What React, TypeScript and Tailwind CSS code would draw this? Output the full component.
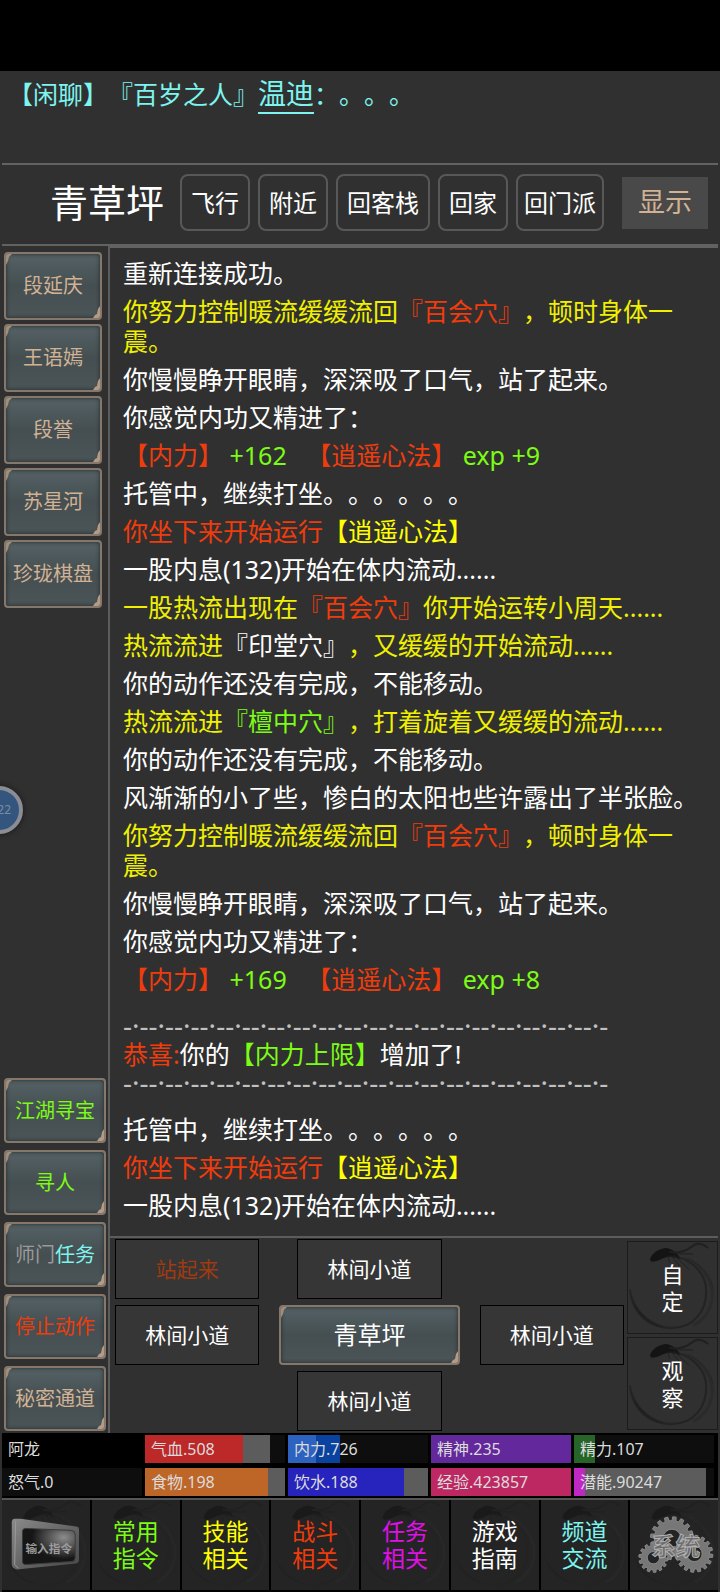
import { ReactNode } from "react";

interface Part {
  text: string;
  color?: string;
}

const YELLOW = "text-[#f0f000]";
const RED = "text-[#f03c0c]";
const GREEN = "text-[#7cfc14]";
const CYAN = "text-[#7df5ee]";
const TAN = "text-[#d2b294]";

const people = ["段延庆", "王语嫣", "段誉", "苏星河", "珍珑棋盘"];

const actions: Part[][] = [
  [{ text: "江湖寻宝", color: GREEN }],
  [{ text: "寻人", color: GREEN }],
  [
    { text: "师门", color: "text-[#9a9a9a]" },
    { text: "任务", color: CYAN },
  ],
  [{ text: "停止动作", color: RED }],
  [{ text: "秘密通道", color: TAN }],
];

const log: Part[][] = [
  [{ text: "重新连接成功。" }],
  [
    { text: "你努力控制暖流缓缓流回", color: YELLOW },
    { text: "『百会穴』", color: RED },
    { text: "，顿时身体一震。", color: YELLOW },
  ],
  [{ text: "你慢慢睁开眼睛，深深吸了口气，站了起来。" }],
  [{ text: "你感觉内功又精进了：" }],
  [
    { text: "【内力】", color: RED },
    { text: " +162   ", color: GREEN },
    { text: "【逍遥心法】", color: RED },
    { text: " exp +9", color: GREEN },
  ],
  [{ text: "托管中，继续打坐。。。。。。" }],
  [
    { text: "你坐下来开始运行", color: RED },
    { text: "【逍遥心法】", color: "text-[#ffff00]" },
  ],
  [{ text: "一股内息(132)开始在体内流动......" }],
  [
    { text: "一股热流出现在", color: YELLOW },
    { text: "『百会穴』", color: RED },
    { text: "你开始运转小周天......", color: YELLOW },
  ],
  [
    { text: "热流流进", color: YELLOW },
    { text: "『印堂穴』" },
    { text: "，又缓缓的开始流动......", color: YELLOW },
  ],
  [{ text: "你的动作还没有完成，不能移动。" }],
  [
    { text: "热流流进", color: YELLOW },
    { text: "『檀中穴』", color: GREEN },
    { text: "，打着旋着又缓缓的流动......", color: YELLOW },
  ],
  [{ text: "你的动作还没有完成，不能移动。" }],
  [{ text: "风渐渐的小了些，惨白的太阳也些许露出了半张脸。" }],
  [
    { text: "你努力控制暖流缓缓流回", color: YELLOW },
    { text: "『百会穴』", color: RED },
    { text: "，顿时身体一震。", color: YELLOW },
  ],
  [{ text: "你慢慢睁开眼睛，深深吸了口气，站了起来。" }],
  [{ text: "你感觉内功又精进了：" }],
  [
    { text: "【内力】", color: RED },
    { text: " +169   ", color: GREEN },
    { text: "【逍遥心法】", color: RED },
    { text: " exp +8", color: GREEN },
  ],
];

const logAfter: Part[][] = [
  [{ text: "托管中，继续打坐。。。。。。" }],
  [
    { text: "你坐下来开始运行", color: RED },
    { text: "【逍遥心法】", color: "text-[#ffff00]" },
  ],
  [{ text: "一股内息(132)开始在体内流动......" }],
];

interface Stat {
  text: string;
  // [colour, width in percent]
  bars: [string, number][];
}

const stats: Stat[] = [
  { text: "阿龙", bars: [["bg-black", 100]] },
  { text: "气血.508", bars: [["bg-[#bd2828]", 70], ["bg-[#5c5c5c]", 19]] },
  { text: "内力.726", bars: [["bg-[#2e62c0]", 20], ["bg-[#0a42a0]", 17]] },
  { text: "精神.235", bars: [["bg-[#62289c]", 100]] },
  { text: "精力.107", bars: [["bg-[#266428]", 15]] },
  { text: "怒气.0", bars: [] },
  { text: "食物.198", bars: [["bg-[#bd6628]", 88], ["bg-[#5c5c5c]", 12]] },
  { text: "饮水.188", bars: [["bg-[#2624bd]", 83], ["bg-[#5c5c5c]", 17]] },
  { text: "经验.423857", bars: [["bg-[#be2862]", 100]] },
  { text: "潜能.90247", bars: [["bg-[#c028c4]", 8], ["bg-[#5c5c5c]", 86]] },
];

const menu = [
  { top: "常用", bottom: "指令", color: GREEN },
  { top: "技能", bottom: "相关", color: "text-[#ffff00]" },
  { top: "战斗", bottom: "相关", color: RED },
  { top: "任务", bottom: "相关", color: "text-[#e010e8]" },
  { top: "游戏", bottom: "指南", color: "text-white" },
  { top: "频道", bottom: "交流", color: CYAN },
];

const Parts = ({ parts }: { parts: Part[] }) => (
  <>
    {parts.map((part, i) => (
      <span key={i} className={part.color}>
        {part.text}
      </span>
    ))}
  </>
);

// stone plate with tan corners
const Plate = ({ className, children }: { className: string; children: ReactNode }) => (
  <button
    type="button"
    className={`relative overflow-hidden rounded border-2 border-[#85786b] bg-linear-to-b from-[#556165] via-[#454f52] to-[#4b5558] shadow-[inset_0_0_4px_#22282a] ${className}`}
  >
    <svg className="absolute top-0 left-0 h-3 w-2" viewBox="0 0 8 12" fill="#a08d7c">
      <path d="M0 0h6L4 2 3 3 2 7 0 11z" />
    </svg>
    <svg className="absolute right-0 bottom-0 h-3 w-2" viewBox="0 0 8 12" fill="#b39c87">
      <path d="M8 12H1l2-3 2-1 1-5 2-3z" />
    </svg>
    {children}
  </button>
);

// ink brush circle with a koi
const InkRing = ({ className }: { className: string }) => (
  <svg className={`absolute inset-0 h-full w-full ${className}`} viewBox="0 0 90 92" fill="none" preserveAspectRatio="none" aria-hidden="true">
    <path d="M2 48C4 72 22 87 44 87C66 87 80 70 79 48C79 36 70 24 58 18" stroke="#232323" strokeWidth="2" />
    <path d="M2 48C3 74 24 90 46 86C36 88 8 78 2 48z" fill="#202020" stroke="#262626" strokeWidth="1" />
    <path d="M60 17C76 24 87 40 85 58C83 70 76 80 66 84" stroke="#2a2a2a" strokeWidth="3" />
    <path d="M50 15C66 17 82 28 86 46" stroke="#262626" strokeWidth="1" />
    <path d="M22 18C24 11 32 6 39 6C44 7 46 9 49 11L53 17L42 15C36 15 31 20 24 20z" fill="#141414" />
    <path d="M42 10C54 12 60 8 67 3C72 0 77 3 81 6" stroke="#202020" strokeWidth="2" />
    <path d="M42 14L58 18M44 14L52 24M46 13L62 28M40 14L42 21M48 12L66 12" stroke="#202020" strokeWidth="1" />
  </svg>
);

const gear = (cx: number, cy: number, r: number, teeth: number) => {
  const points: string[] = [];
  for (let i = 0; i < teeth; i++) {
    const a = (i / teeth) * Math.PI * 2;
    const step = (Math.PI * 2) / teeth;
    [
      [a, r * 0.82],
      [a + step * 0.1, r],
      [a + step * 0.5, r],
      [a + step * 0.6, r * 0.82],
    ].forEach(([angle, d]) =>
      points.push(`${(cx + Math.cos(angle) * d).toFixed(1)},${(cy + Math.sin(angle) * d).toFixed(1)}`)
    );
  }
  const h = r * 0.42;
  return `M${points.join("L")}zM${cx - h},${cy}a${h},${h} 0 1 0 ${h * 2},0a${h},${h} 0 1 0 ${-h * 2},0z`;
};

const TerminalIcon = () => (
  <svg className="relative h-[92px] w-full" viewBox="0 0 90 92">
    <defs>
      <linearGradient id="frame" x1="0" x2="1" y1="0" y2="1">
        <stop offset="0" stopColor="#8a8a8a" />
        <stop offset="0.5" stopColor="#666666" />
        <stop offset="1" stopColor="#474747" />
      </linearGradient>
      <radialGradient id="glass" cx="0.78" cy="0.25" r="0.6">
        <stop offset="0" stopColor="#8c8c8c" />
        <stop offset="1" stopColor="#161616" />
      </radialGradient>
    </defs>
    <path d="M13 18Q10 18 10 22V64Q10 69 15 70L76 64Q79 63 79 60V29Q79 26 76 26L19 18z" fill="url(#frame)" />
    <path d="M14 20L13 65L17 69" stroke="#9a9a9a" strokeWidth="1" fill="none" />
    <path d="M24 28L71 30Q75 30 75 34V58Q75 62 71 62L24 65Q21 65 21 62V31Q21 28 24 28z" fill="url(#glass)" stroke="#3a3a3a" />
    <text x="48" y="53" textAnchor="middle" fontSize="12" fontWeight="700" fill="#9c9c9c">
      输入指令
    </text>
  </svg>
);

const GearsIcon = () => (
  <svg className="relative h-[92px] w-full" viewBox="0 0 90 92">
    <g fill="#777777" fillRule="evenodd" stroke="#8a8a8a">
      <path d={gear(43, 38, 22, 16)} />
      <path d={gear(24, 58, 15, 14)} />
      <path d={gear(66, 54, 19, 16)} />
    </g>
    <text x="47" y="55" textAnchor="middle" fontSize="25" fontWeight="700" fill="#6c6c6c" stroke="#b0b0b0" strokeWidth="1">
      系统
    </text>
  </svg>
);

const TopButton = ({ children, className = "px-[9px]" }: { children: string; className?: string }) => (
  <button type="button" className={`h-[57px] shrink-0 rounded-lg border-2 border-[#585858] text-2xl text-white ${className}`}>
    {children}
  </button>
);

const Exit = ({ name, className }: { name: string; className: string }) => (
  <button type="button" className={`h-[60px] border border-black bg-[#363636] pt-0.5 text-[21px] ${className}`}>
    {name}
  </button>
);

const Side = ({ top, bottom }: { top: string; bottom: string }) => (
  <button type="button" className="relative flex flex-1 flex-col items-center justify-center border border-[#1c1c1c] text-[22px] leading-[27px] text-white">
    <InkRing className="" />
    <span className="relative">{top}</span>
    <span className="relative">{bottom}</span>
  </button>
);

const Divider = () => (
  <p className="text-[28px] leading-[27px] whitespace-nowrap text-[#c0c0c0]">{"-·-".repeat(19)}</p>
);

const App = () => {
  return (
    <div className="flex min-h-screen flex-col bg-[#303030] font-['Noto_Sans','Noto_Sans_CJK_SC',sans-serif] text-white [text-spacing-trim:space-all]">
      <div className="h-[71px] bg-black" />

      <div className="h-[92px] px-2 pt-1.5 text-[25px] leading-8 text-[#7df5ee]">
        <span>【闲聊】</span>
        <span>『百岁之人』</span>
        <a href="#wendi" className="border-b-2 border-[#7df5ee] text-[28px]">
          温迪
        </a>
        <span>：。。。</span>
      </div>

      <header className="mx-0.5 flex h-[81px] items-center gap-2 border-t-2 border-[#626262] pr-2.5 pb-1 pl-12">
        <h1 className="mr-2 shrink-0 text-[38px]">青草坪</h1>
        <TopButton>飞行</TopButton>
        <TopButton>附近</TopButton>
        <TopButton>回客栈</TopButton>
        <TopButton>回家</TopButton>
        <TopButton className="px-1.5">回门派</TopButton>
        <button type="button" className={`ml-auto h-[52px] shrink-0 bg-[#494949] px-4 text-[27px] ${TAN}`}>
          显示
        </button>
      </header>

      <div className="mx-0.5 flex flex-1 border-t-2 border-[#626262]">
        <aside className="flex w-[108px] shrink-0 flex-col justify-between border-r-2 border-[#5c5c5c] pt-1.5 pr-0.5 pb-0.5 pl-0.5">
          <div className="flex flex-col gap-1 pr-1">
            {people.map((name) => (
              <Plate key={name} className={`h-[68px] text-xl ${TAN}`}>
                {name}
              </Plate>
            ))}
          </div>
          <div className="flex flex-col gap-[7px]">
            {actions.map((parts, i) => (
              <Plate key={i} className="h-[65px] text-xl">
                <Parts parts={parts} />
              </Plate>
            ))}
          </div>
        </aside>

        <main className="flex min-w-0 flex-1 flex-col border-t-2 border-[#626262]">
          <div className="flex flex-1 flex-col gap-2 pt-2.5 pr-1 pl-[13px] text-[25px] leading-[30px]">
            {log.map((parts, i) => (
              <p key={i} className="whitespace-pre-wrap">
                <Parts parts={parts} />
              </p>
            ))}
            <div className="pt-2.5 pb-2.5">
              <Divider />
              <p>
                <span className={RED}>恭喜:</span>你的
                <span className={GREEN}>【内力上限】</span>增加了!
              </p>
              <Divider />
            </div>
            {logAfter.map((parts, i) => (
              <p key={i}>
                <Parts parts={parts} />
              </p>
            ))}
          </div>

          <div className="flex h-[197px] gap-[3px] border-t-2 border-[#5c5c5c] pl-[5px]">
            <div className="grid flex-1 grid-cols-[144fr_180fr_144fr] content-start gap-x-5 gap-y-1.5 pt-px">
              <Exit name="站起来" className="text-[#a03a10]" />
              <Exit name="林间小道" className="mx-[18px]" />
              <span />
              <Exit name="林间小道" className="" />
              <Plate className="h-[60px] text-2xl">青草坪</Plate>
              <Exit name="林间小道" className="" />
              <Exit name="林间小道" className="col-start-2 mx-[18px]" />
            </div>
            <div className="flex w-[91px] flex-col gap-[3px] pt-[3px] pb-[3px]">
              <Side top="自" bottom="定" />
              <Side top="观" bottom="察" />
            </div>
          </div>
        </main>
      </div>

      <div className="mx-0.5 grid grid-cols-5 gap-x-[3px] gap-y-[5px] bg-black py-0.5 pr-1">
        {stats.map((stat) => (
          <div key={stat.text} className="relative h-7 bg-[#0e0e0e]">
            <div className="flex h-full">
              {stat.bars.map(([color, width], i) => (
                <div key={i} className={color} style={{ width: `${width}%` }} />
              ))}
            </div>
            <span className="absolute inset-0 pl-1.5 text-base leading-7 text-[#dcdcdc]">{stat.text}</span>
          </div>
        ))}
      </div>

      <nav className="mx-0.5 grid grid-cols-8 gap-x-0.5 border-t-2 border-b-2 border-t-[#555555] border-b-black bg-black">
        <button type="button" className="relative h-[90px] overflow-hidden bg-[#242424]">
          <InkRing className="opacity-60" />
          <TerminalIcon />
        </button>
        {menu.map((item) => (
          <button
            key={item.top}
            type="button"
            className={`relative flex h-[90px] flex-col items-center justify-center bg-[#242424] text-[23px] leading-[27px] ${item.color}`}
          >
            <InkRing className="opacity-60" />
            <span className="relative">{item.top}</span>
            <span className="relative">{item.bottom}</span>
          </button>
        ))}
        <button type="button" className="relative h-[90px] overflow-hidden bg-[#242424]">
          <InkRing className="opacity-60" />
          <GearsIcon />
        </button>
      </nav>

      {/* floating ball at the left edge of the screen */}
      <button
        type="button"
        className="absolute top-[786px] -left-[25px] size-12 rounded-full border-4 border-[#8a8d93] bg-[#34567e] pr-2 text-right text-xs text-[#7d8ba0] shadow-[0_0_4px_2px_#232323]"
      >
        22
      </button>
    </div>
  );
};

export default App;
